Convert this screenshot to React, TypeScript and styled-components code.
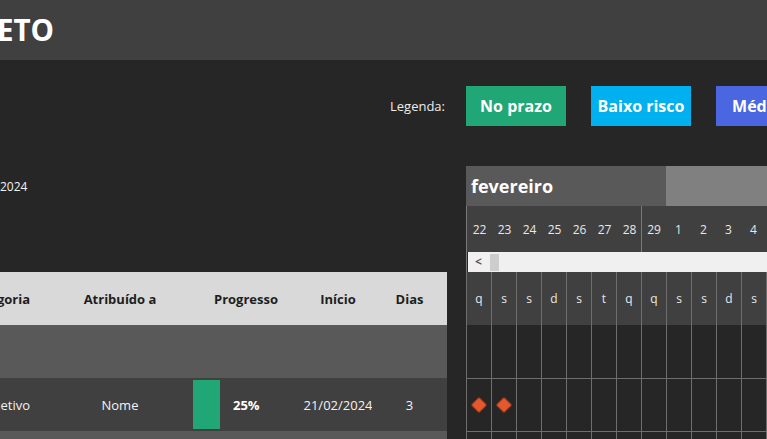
import React from 'react'
import styled, { createGlobalStyle } from 'styled-components'

const GlobalStyle = createGlobalStyle`
  html, body {
    margin: 0;
    padding: 0;
    background: #262626;
    overflow: hidden;
  }
  * { box-sizing: border-box; }
`

const days = ['22', '23', '24', '25', '26', '27', '28', '29', '1', '2', '3', '4', '5', '6']
const weekdays = ['q', 's', 's', 'd', 's', 't', 'q', 'q', 's', 's', 'd', 's', 't', 'q']
const legend = [
    { label: 'No prazo', color: '#21a675', width: 100 },
    { label: 'Baixo risco', color: '#00b0ef', width: 100 },
    { label: 'Médio risco', color: '#4a66e0', width: 124 },
]

const Page = styled.div`
    width: 767px;
    height: 439px;
    overflow: hidden;
    background: #262626;
    font-family: "Open Sans", "Noto Sans", sans-serif;
    color: #f2f2f2;
`

const TitleBar = styled.header`
    height: 60px;
    background: #404040;
    display: flex;
    align-items: center;
`

const Title = styled.h1`
    margin: 0 0 0 -3px;
    font-size: 29.5px;
    font-weight: 700;
    color: #ffffff;
    line-height: 1;
`

const Layout = styled.div`
    display: grid;
    grid-template-columns: 447px 1fr;
    column-gap: 19px;
    padding-top: 26px;
`

const LegendLabel = styled.div`
    height: 40px;
    display: flex;
    align-items: center;
    justify-content: flex-end;
    padding-right: 2px;
    font-size: 13px;
    color: #ececec;
`

const Legend = styled.div`
    display: flex;
    gap: 25px;
    overflow: hidden;
`

const LegendBox = styled.div<{ $color: string; $width: number }>`
    flex: 0 0 ${p => p.$width}px;
    height: 40px;
    background: ${p => p.$color};
    display: flex;
    align-items: center;
    justify-content: center;
    font-size: 16px;
    font-weight: 700;
    color: #ffffff;
    white-space: nowrap;
`

const LeftColumn = styled.div`
    margin-top: 40px;
    display: flex;
    flex-direction: column;
`

const DateLine = styled.div`
    height: 40px;
    display: flex;
    align-items: center;
    font-size: 12px;
    color: #f2f2f2;
`

const Table = styled.div`
    margin-top: 66px;
    margin-left: -100px;
    display: grid;
    grid-template-columns: 160px 120px 124px 68px 75px;
`

const Cell = styled.div<{ $bg: string; $dark?: boolean; $bold?: boolean; $first?: boolean; $shift?: number }>`
    height: 53px;
    background: ${p => p.$bg};
    color: ${p => (p.$dark ? '#1e1e1e' : '#f2f2f2')};
    font-size: 13px;
    font-weight: ${p => (p.$bold ? 700 : 400)};
    display: flex;
    align-items: center;
    justify-content: ${p => (p.$first ? 'flex-end' : 'center')};
    padding-right: ${p => (p.$first ? '30px' : '0')};
    padding-left: ${p => p.$shift || 0}px;
    white-space: nowrap;
`

const ProgressCell = styled.div`
    height: 53px;
    background: #404040;
    display: flex;
    align-items: center;
    gap: 13px;
    padding-left: 13px;
    font-size: 13px;
    font-weight: 700;
    color: #ffffff;
`

const ProgressBar = styled.div`
    width: 27px;
    height: 49px;
    background: #21a675;
`

const Gantt = styled.div`
    margin-top: 40px;
    overflow: hidden;
`

const MonthRow = styled.div`
    height: 40px;
    display: flex;
    background: #808080;
`

const MonthCell = styled.div`
    width: 200px;
    background: #595959;
    display: flex;
    align-items: center;
    padding-left: 5px;
    font-size: 18px;
    font-weight: 700;
    color: #ffffff;
`

const DayRow = styled.div`
    height: 46px;
    display: flex;
    background: #404040;
    border-left: 1px solid #7a7a7a;
`

const DayCell = styled.div<{ $split?: boolean }>`
    flex: 0 0 25px;
    display: flex;
    align-items: center;
    justify-content: center;
    font-size: 12px;
    color: #e8e8e8;
    border-left: ${p => (p.$split ? '1px solid #7a7a7a' : '0')};
    margin-left: ${p => (p.$split ? '-1px' : '0')};
`

const ScrollBar = styled.div`
    height: 20px;
    background: #262626;
    display: flex;
    border-left: 1px solid #7a7a7a;
    padding-left: 1px;
`

const ScrollTrack = styled.div`
    flex: 1;
    background: #f0f0f0;
    display: flex;
    align-items: center;
    padding-left: 7px;
    gap: 8px;
`

const ScrollArrow = styled.span`
    font-size: 12px;
    font-weight: 700;
    color: #555555;
    line-height: 1;
`

const ScrollThumb = styled.div`
    width: 9px;
    height: 17px;
    background: #cdcdcd;
`

const GridRow = styled.div<{ $bg: string; $line?: boolean }>`
    height: 53px;
    display: flex;
    background: ${p => p.$bg};
    border-top: ${p => (p.$line ? '1px solid #6e6e6e' : '0')};
`

const GridCell = styled.div`
    flex: 0 0 25px;
    border-left: 1px solid #6e6e6e;
    display: flex;
    align-items: center;
    justify-content: center;
    font-size: 12px;
    color: #e8e8e8;
`

const Diamond = styled.div`
    width: 12px;
    height: 12px;
    background: #e5582d;
    border: 1px solid #8e3519;
    border-radius: 2px;
    transform: rotate(45deg);
`

function App() {
    return (
        <Page>
            <GlobalStyle />
            <TitleBar>
                <Title>ETO</Title>
            </TitleBar>
            <Layout>
                <LegendLabel>Legenda:</LegendLabel>
                <Legend>
                    {legend.map(({ label, color, width }) => (
                        <LegendBox key={label} $color={color} $width={width}>{label}</LegendBox>
                    ))}
                </Legend>

                <LeftColumn>
                    <DateLine>2024</DateLine>
                    <Table>
                        <Cell $bg='#d9d9d9' $dark $bold $first>Categoria</Cell>
                        <Cell $bg='#d9d9d9' $dark $bold>Atribuído a</Cell>
                        <Cell $bg='#d9d9d9' $dark $bold $shift={8}>Progresso</Cell>
                        <Cell $bg='#d9d9d9' $dark $bold>Início</Cell>
                        <Cell $bg='#d9d9d9' $dark $bold>Dias</Cell>

                        <Cell $bg='#595959' />
                        <Cell $bg='#595959' />
                        <Cell $bg='#595959' />
                        <Cell $bg='#595959' />
                        <Cell $bg='#595959' />

                        <Cell $bg='#404040' $first>Objetivo</Cell>
                        <Cell $bg='#404040'>Nome</Cell>
                        <ProgressCell>
                            <ProgressBar />
                            25%
                        </ProgressCell>
                        <Cell $bg='#404040'>21/02/2024</Cell>
                        <Cell $bg='#404040'>3</Cell>

                        <Cell $bg='#595959' />
                        <Cell $bg='#595959' />
                        <Cell $bg='#595959' />
                        <Cell $bg='#595959' />
                        <Cell $bg='#595959' />
                    </Table>
                </LeftColumn>

                <Gantt>
                    <MonthRow>
                        <MonthCell>fevereiro</MonthCell>
                    </MonthRow>
                    <DayRow>
                        {days.map((d, i) => (
                            <DayCell key={i} $split={d === '29'}>{d}</DayCell>
                        ))}
                    </DayRow>
                    <ScrollBar>
                        <ScrollTrack>
                            <ScrollArrow>&lt;</ScrollArrow>
                            <ScrollThumb />
                        </ScrollTrack>
                    </ScrollBar>
                    <GridRow $bg='#404040'>
                        {weekdays.map((w, i) => <GridCell key={i}>{w}</GridCell>)}
                    </GridRow>
                    <GridRow $bg='#262626'>
                        {weekdays.map((_, i) => <GridCell key={i} />)}
                    </GridRow>
                    <GridRow $bg='#262626' $line>
                        {weekdays.map((_, i) => (
                            <GridCell key={i}>{i < 2 && <Diamond />}</GridCell>
                        ))}
                    </GridRow>
                    <GridRow $bg='#262626' $line>
                        {weekdays.map((_, i) => <GridCell key={i} />)}
                    </GridRow>
                </Gantt>
            </Layout>
        </Page>
    )
}

export default App
